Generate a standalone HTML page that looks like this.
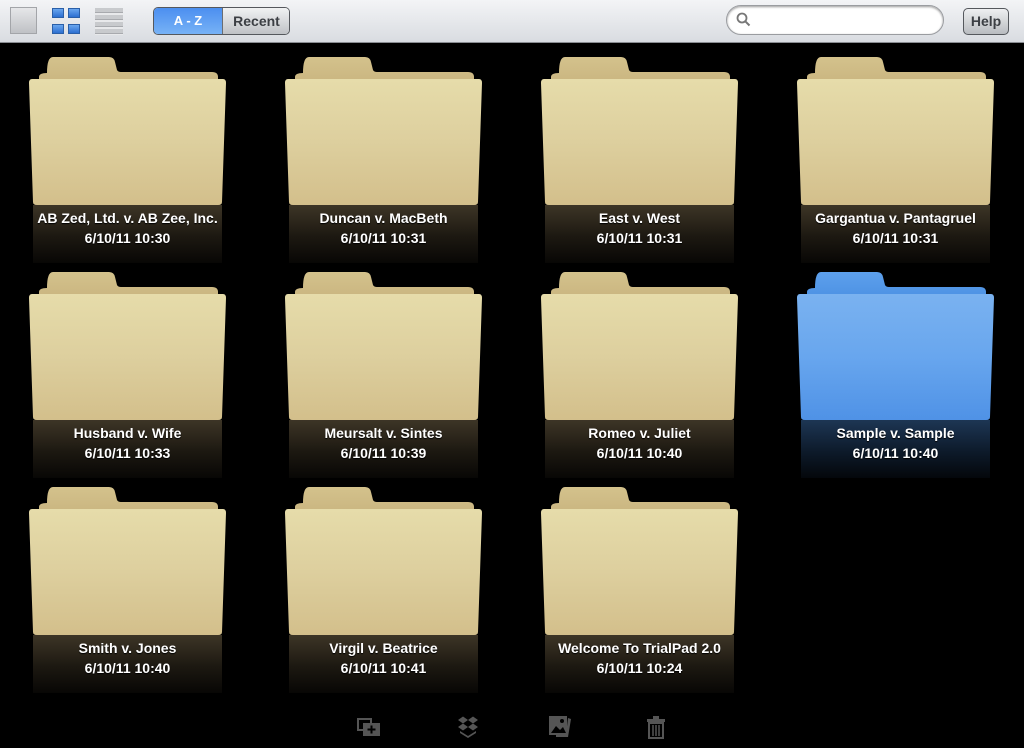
<!DOCTYPE html>
<html><head><meta charset="utf-8"><style>
body{margin:0;width:1024px;height:748px;background:#000;overflow:hidden;font-family:"Liberation Sans",Arial,sans-serif;position:relative}
.bar{position:absolute;left:0;top:0;width:1024px;height:42px;background:linear-gradient(#f3f4f6,#d9dce1);border-bottom:1px solid #8a8d92}
.cell{position:absolute;width:197px;height:206px}
.cell svg{position:absolute;left:0;top:0}
.refl{position:absolute;left:4px;top:148px;width:189px;height:58px;background:linear-gradient(#3d3526,#1c1811 55%,#080705)}
.refl.b{background:linear-gradient(#1d3654,#0d1a2a 55%,#04070b)}
.t{position:absolute;left:-20px;width:237px;text-align:center;color:#fff;font-weight:bold;font-size:14px;line-height:16px;text-shadow:0 1px 1px #000}
.l1{top:153px}.l2{top:173px}
</style></head><body>
<div class="bar">
  <div style="position:absolute;left:10px;top:7px;width:27px;height:27px;background:linear-gradient(#e6e7e9,#bfc1c5);border:1px solid #a3a5a9;box-sizing:border-box"></div>
  <div style="position:absolute;left:52px;top:8px;width:12px;height:10px;background:linear-gradient(#6aa6ef,#2c6fd0);border:1px solid #2a5fa8;box-sizing:border-box"></div>
  <div style="position:absolute;left:68px;top:8px;width:12px;height:10px;background:linear-gradient(#6aa6ef,#2c6fd0);border:1px solid #2a5fa8;box-sizing:border-box"></div>
  <div style="position:absolute;left:52px;top:24px;width:12px;height:10px;background:linear-gradient(#6aa6ef,#2c6fd0);border:1px solid #2a5fa8;box-sizing:border-box"></div>
  <div style="position:absolute;left:68px;top:24px;width:12px;height:10px;background:linear-gradient(#6aa6ef,#2c6fd0);border:1px solid #2a5fa8;box-sizing:border-box"></div>
  <div style="position:absolute;left:95px;top:8px;width:28px;height:27px;background:repeating-linear-gradient(#c8cacd 0,#c8cacd 4px,#a8aaae 4px,#a8aaae 5px,#e8e9eb 5px,#e8e9eb 7px)"></div>
  <div style="position:absolute;left:153px;top:7px;width:137px;height:28px;border:1px solid #55585d;border-radius:5px;overflow:hidden;box-sizing:border-box">
    <div style="position:absolute;left:0;top:0;width:68px;height:26px;background:linear-gradient(#4c8ff0,#77b2f6);color:#fff;font-weight:bold;font-size:13px;line-height:26px;text-align:center">A - Z</div>
    <div style="position:absolute;left:68px;top:0;width:67px;height:26px;background:linear-gradient(#f1f2f3,#bfc2c6);border-left:1px solid #6a6d72;color:#3c3f44;font-weight:bold;font-size:14px;line-height:26px;text-align:center">Recent</div>
  </div>
  <div style="position:absolute;left:726px;top:5px;width:218px;height:30px;border-radius:15px;background:#fff;border:1px solid #9a9ca0;box-sizing:border-box;box-shadow:inset 0 1px 2px #999">
    <svg width="16" height="16" style="position:absolute;left:9px;top:6px"><circle cx="6" cy="6" r="4.5" fill="none" stroke="#777" stroke-width="1.8"/><line x1="9.3" y1="9.3" x2="13.5" y2="13.5" stroke="#777" stroke-width="2"/></svg>
  </div>
  <div style="position:absolute;left:963px;top:8px;width:46px;height:27px;border:1px solid #55585d;border-radius:5px;box-sizing:border-box;background:linear-gradient(#eeeff1,#b9bcc0);color:#3c3f44;font-weight:bold;font-size:14px;line-height:25px;text-align:center">Help</div>
</div>
<svg width="0" height="0" style="position:absolute">
<defs>
<linearGradient id="ty" x1="0" y1="0" x2="0" y2="1"><stop offset="0" stop-color="#d4c28c"/><stop offset="1" stop-color="#c8b37e"/></linearGradient>
<linearGradient id="fy" x1="0" y1="0" x2="0" y2="1"><stop offset="0" stop-color="#e6dcaa"/><stop offset="0.5" stop-color="#ddcf9e"/><stop offset="1" stop-color="#d3bf8b"/></linearGradient>
<linearGradient id="tb" x1="0" y1="0" x2="0" y2="1"><stop offset="0" stop-color="#5da0ec"/><stop offset="1" stop-color="#4a8fe2"/></linearGradient>
<linearGradient id="fb" x1="0" y1="0" x2="0" y2="1"><stop offset="0" stop-color="#7ab2f0"/><stop offset="0.5" stop-color="#68a6ee"/><stop offset="1" stop-color="#4f92e6"/></linearGradient>
</defs></svg>
<div id="g"></div>
<script>
var items=[["AB Zed, Ltd. v. AB Zee, Inc.","6/10/11 10:30"],["Duncan v. MacBeth","6/10/11 10:31"],["East v. West","6/10/11 10:31"],["Gargantua v. Pantagruel","6/10/11 10:31"],["Husband v. Wife","6/10/11 10:33"],["Meursalt v. Sintes","6/10/11 10:39"],["Romeo v. Juliet","6/10/11 10:40"],["Sample v. Sample","6/10/11 10:40"],["Smith v. Jones","6/10/11 10:40"],["Virgil v. Beatrice","6/10/11 10:41"],["Welcome To TrialPad 2.0","6/10/11 10:24"]];
var h="";
items.forEach(function(it,i){var c=i%4,r=Math.floor(i/4),b=i==7;
var t=b?"tb":"ty",f=b?"fb":"fy";
h+='<div class="cell" style="left:'+(29+256*c)+'px;top:'+(57+215*r)+'px">'+
'<svg width="197" height="150"><path d="M18 16 Q18 0 24 0 L80 0 Q85 0 86 5 L88 13 Q89 15 92 15 L183 15 Q189 15 189 20 L189 30 L10 30 L10 20 Q10 16 18 16Z" fill="url(#'+t+')"/>'+
'<path d="M3 22 L194 22 Q197 22 197 26 L193 145 Q193 148 189 148 L8 148 Q4 148 4 145 L0 26 Q0 22 3 22Z" fill="url(#'+f+')"/></svg>'+
'<div class="refl'+(b?' b':'')+'"></div>'+
'<div class="t l1">'+it[0]+'</div><div class="t l2">'+it[1]+'</div></div>';});
document.getElementById("g").innerHTML=h;
</script>
<svg width="1024" height="40" style="position:absolute;left:0;top:708px" fill="#555">
<rect x="358" y="11" width="13" height="11" fill="none" stroke="#555" stroke-width="2"/>
<rect x="363" y="15" width="17" height="13"/><path d="M371.5 17.5v8M367.5 21.5h8" stroke="#000" stroke-width="2"/>
<path d="M458 12l5-3.5 5 3.5-5 3.5zM468 12l5-3.5 5 3.5-5 3.5zM458 19l5-3.5 5 3.5-5 3.5zM468 19l5-3.5 5 3.5-5 3.5z"/>
<path d="M460 23l8 5 8-5v2l-8 5-8-5z"/>
<rect x="549" y="8" width="18" height="19"/><path d="M568 10l3 1-3 18h-12v-2h10z"/>
<path d="M551 25l5-7 4 4 3-3 3 6z" fill="#000"/><circle cx="562" cy="13" r="2" fill="#000"/>
<rect x="647" y="11" width="18" height="3"/><rect x="653" y="8" width="6" height="3"/>
<rect x="649" y="15" width="14" height="15" fill="none" stroke="#555" stroke-width="2"/>
<path d="M653 17v11M656 17v11M659 17v11" stroke="#555" stroke-width="1.5"/>
</svg>
</body></html>
